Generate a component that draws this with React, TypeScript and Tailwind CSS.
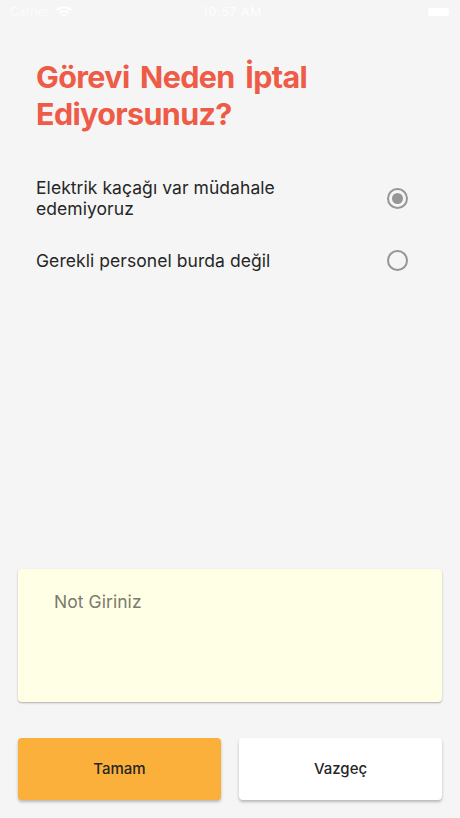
import React, { useState } from "react";

const reasons = [
  "Elektrik kaçağı var müdahale edemiyoruz",
  "Gerekli personel burda değil",
];

function StatusBar() {
  return (
    <div className="grid h-6 grid-cols-3 items-center pl-2.5 pr-[11px] text-[12px] leading-6 text-white">
      <div className="flex items-center gap-2">
        <span className="w-[38px] text-[12px] opacity-70">Carrier</span>
        <svg width="16" height="12" viewBox="0 0 16 12" fill="none" stroke="currentColor" strokeWidth="2">
          <path d="M1 4.2a10 10 0 0 1 14 0M3.5 7a6.4 6.4 0 0 1 9 0" />
          <path d="M5.8 9.2a3.1 3.1 0 0 1 4.4 0L8 11.5z" fill="currentColor" stroke="none" />
        </svg>
      </div>
      <span className="whitespace-nowrap pl-1.5 text-center font-medium tracking-[0.7px] opacity-80">10:57 AM</span>
      <div className="h-2 w-[21px] justify-self-end rounded-[2px] bg-white" />
    </div>
  );
}

function Radio({ checked }: { checked: boolean }) {
  return (
    <span className="flex size-[21px] shrink-0 items-center justify-center rounded-full border-2 border-[#969696]">
      {checked && <span className="size-[11px] rounded-full bg-[#969696]" />}
    </span>
  );
}

export default function App() {
  const [selected, setSelected] = useState(0);

  return (
    <div className="flex h-[818px] w-full flex-col bg-[#f5f5f5] font-['Inter',sans-serif] text-[#262626]">
      <StatusBar />
      <h1 className="mt-[34px] px-9 text-[30.5px] font-bold leading-[37px] tracking-[-0.65px] text-[#ee5b46] [word-spacing:4px]">
        Görevi Neden İptal
        <br />
        Ediyorsunuz?
      </h1>
      <div className="mt-[35px] flex flex-col pl-9 pr-[52px]">
        {reasons.map((reason, i) => (
          <button
            key={reason}
            type="button"
            onClick={() => setSelected(i)}
            className="flex h-[62px] items-center justify-between text-left"
          >
            <span className="w-[260px] text-[17.5px] leading-[21px] tracking-[0.06px]">{reason}</span>
            <Radio checked={selected === i} />
          </button>
        ))}
      </div>
      <div className="mt-auto px-[18px] pb-[18px]">
        <textarea
          placeholder="Not Giriniz"
          className="block h-[133px] w-full resize-none rounded bg-[#ffffe5] px-9 py-[22px] text-[17.5px] leading-[21px] tracking-[0.06px] shadow-[0_1px_2px_rgba(0,0,0,0.3)] outline-none placeholder:text-[#7b7b6d]"
        />
        <div className="mt-[36px] grid grid-cols-2 gap-[18px] text-[15px] font-medium">
          <button type="button" className="h-[62px] rounded bg-[#fbb03b] shadow-[0_2px_3px_rgba(0,0,0,0.25)]">
            Tamam
          </button>
          <button type="button" className="h-[62px] rounded bg-white shadow-[0_2px_3px_rgba(0,0,0,0.25)]">
            Vazgeç
          </button>
        </div>
      </div>
    </div>
  );
}
